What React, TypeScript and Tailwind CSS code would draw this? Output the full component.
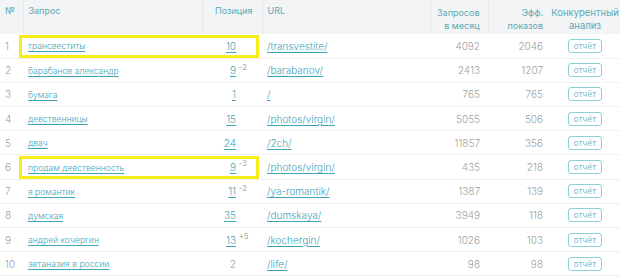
import React from 'react';

type Row = {
  n: number;
  q: string;
  pos: string;
  posLink: boolean;
  delta?: string;
  url: string;
  req: string;
  eff: string;
  hl?: boolean;
};

const rows: Row[] = [
  { n: 1, q: 'трансвеститы', pos: '10', posLink: true, url: '/transvestite/', req: '4092', eff: '2046', hl: true },
  { n: 2, q: 'барабанов александр', pos: '9', posLink: true, delta: '-2', url: '/barabanov/', req: '2413', eff: '1207' },
  { n: 3, q: 'бумага', pos: '1', posLink: true, url: '/', req: '765', eff: '765' },
  { n: 4, q: 'девственницы', pos: '15', posLink: true, url: '/photos/virgin/', req: '5055', eff: '506' },
  { n: 5, q: 'двач', pos: '24', posLink: true, url: '/2ch/', req: '11857', eff: '356' },
  { n: 6, q: 'продам девственность', pos: '9', posLink: true, delta: '-3', url: '/photos/virgin/', req: '435', eff: '218', hl: true },
  { n: 7, q: 'я романтик', pos: '11', posLink: true, delta: '-2', url: '/ya-romantik/', req: '1387', eff: '139' },
  { n: 8, q: 'думская', pos: '35', posLink: true, url: '/dumskaya/', req: '3949', eff: '118' },
  { n: 9, q: 'андрей кочергин', pos: '13', posLink: true, delta: '+5', url: '/kochergin/', req: '1026', eff: '103' },
  { n: 10, q: 'эвтаназия в россии', pos: '2', posLink: false, url: '/life/', req: '98', eff: '98' },
];

const App = () => {
  return (
    <div
      className="w-[620px] h-[276px] overflow-hidden bg-white text-[10px] leading-[12px] font-light"
      style={{ fontFamily: 'Inter, "Open Sans", sans-serif' }}
    >
      <table className="w-[620px] table-fixed border-collapse">
        <colgroup>
          <col className="w-[23px]" />
          <col className="w-[179px]" />
          <col className="w-[60px]" />
          <col className="w-[168px]" />
          <col className="w-[58px]" />
          <col className="w-[62px]" />
          <col className="w-[70px]" />
        </colgroup>
        <thead className="bg-[#f2f4f5] text-[#5aaab5] text-[9px]">
          <tr className="h-[34px]">
            <th className="pl-[5px] text-left font-normal align-top pt-[5px] border-r border-[#e6eaec]">№</th>
            <th className="pl-[5px] text-left font-normal align-top pt-[5px] border-r border-[#e6eaec]">Запрос</th>
            <th className="pr-[9px] text-right font-normal align-top pt-[5px] border-r border-[#e6eaec]">Позиция</th>
            <th className="pl-[5px] text-left font-normal align-top pt-[5px] border-r border-[#e6eaec]">URL</th>
            <th className="pr-[8px] text-right font-normal align-top pt-[6px] leading-[13px] border-r border-[#e6eaec]">Запросов в месяц</th>
            <th className="pr-[7px] text-right font-normal align-top pt-[6px] leading-[13px]">Эфф. показов</th>
            <th className="text-center font-normal align-top pt-[6px] leading-[13px] text-[9.5px]">Конкурентный анализ</th>
          </tr>
        </thead>
        <tbody>
          {rows.map((r) => (
            <tr key={r.n} className="h-[24.2px] border-b border-[#eef0f1]">
              <td className="pl-[5px] text-[#a0a0a0]">{r.n}</td>
              <td className="pl-[5px] relative">
                <a className="text-[#3fa4b9] text-[8.6px] underline underline-offset-2">{r.q}</a>
                {r.hl && (
                  <div className="absolute left-[-4px] top-[1px] w-[240px] h-[23px] border-[3px] border-[#f7ec1c] pointer-events-none" />
                )}
              </td>
              <td className="pr-[26px] text-right relative">
                {r.posLink ? (
                  <a className="text-[#3fa4b9] underline underline-offset-2">{r.pos}</a>
                ) : (
                  <span className="text-[#a0a0a0]">{r.pos}</span>
                )}
                {r.delta && (
                  <span className="absolute left-[37px] top-[3px] text-[7.5px] text-[#888]">{r.delta}</span>
                )}
              </td>
              <td className="pl-[5px]">
                <a className="text-[#3fa4b9] underline underline-offset-2">{r.url}</a>
              </td>
              <td className="pr-[8px] text-right text-[#a0a0a0]">{r.req}</td>
              <td className="pr-[7px] text-right text-[#a0a0a0]">{r.eff}</td>
              <td className="text-center">
                <span className="inline-block px-[5px] h-[14px] leading-[12px] border border-[#8fd0d6] rounded-[3px] text-[8px] text-[#4aa6b3] tracking-[0.3px]">
                  отчёт
                </span>
              </td>
            </tr>
          ))}
        </tbody>
      </table>
    </div>
  );
};

export default App;
